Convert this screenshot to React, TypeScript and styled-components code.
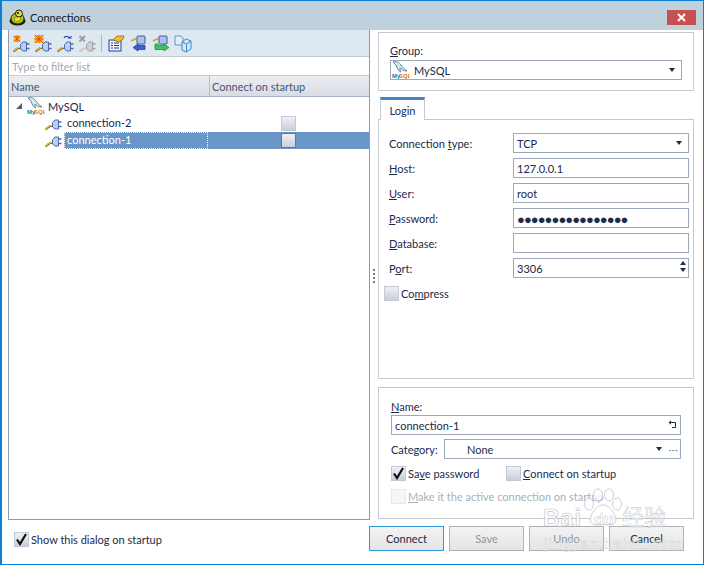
import React from "react";
import styled, { createGlobalStyle } from "styled-components";

const Global = createGlobalStyle`
  html, body { margin: 0; padding: 0; background: #fff; }
  body { font-family: "Lato", "Open Sans", sans-serif; font-size: 11px; color: #1b2a4b; }
  * { box-sizing: border-box; }
  u { text-underline-offset: 1px; }
`;

const Win = styled.div`
  position: relative; width: 704px; height: 565px; border: 1px solid #0f7fd6; border-left-width: 2px;
  display: flex; flex-direction: column; background: #fff; overflow: hidden;
`;
const TitleBar = styled.div`
  height: 29px; flex: none; background: #bfd1dc; display: flex; align-items: center; padding: 3px 0 0 7px; gap: 4px;
  font-size: 11px; color: #10192b; position: relative;
`;
const CloseBtn = styled.div`
  position: absolute; right: 7px; top: 9px; width: 29px; height: 15px; background: #c75050;
  display: flex; align-items: center; justify-content: center;
`;
const Body = styled.div`
  flex: none; height: 490px; display: flex; padding-left: 6px;
`;
const LeftCol = styled.div`
  width: 362px; height: 490px; display: flex; flex-direction: column;
  border: 1px solid #8b9bb0; border-top: none;
`;
const Toolbar = styled.div`
  height: 26px; flex: none; background: #dde8f0; display: flex; align-items: center; padding: 1px 0 0 1px;
`;
const ToolBtn = styled.span`
  width: 22px; height: 20px; display: flex; align-items: center; justify-content: center;
`;
const ToolSep = styled.span`
  width: 1px; height: 17px; background: #a9b7c2; margin: 0 4px 0 3px;
`;
const Filter = styled.div`
  height: 20px; flex: none; border-top: 1px solid #c4ccd4; border-bottom: 1px solid #c4ccd4; background: #fff; color: #a2a9b4;
  padding-left: 3px; display: flex; align-items: center;
`;
const HeadRow = styled.div`
  height: 21px; flex: none; display: grid; grid-template-columns: 200px 1fr;
  background: linear-gradient(#eceef1, #d8dce5); border-bottom: 1px solid #a7b3c2; color: #46556e;
`;
const HeadCell = styled.div`
  padding-left: 2px; display: flex; align-items: center;
  & + & { border-left: 1px solid #b5bfcb; }
`;
const Tree = styled.div`
  flex: 1; background: #fff; display: flex; flex-direction: column;
`;
const GroupRow = styled.div`
  height: 18px; display: flex; align-items: center; padding-left: 6px; gap: 3px;
`;
const ConnRow = styled.div`
  height: 17px; display: grid; grid-template-columns: 199px 1fr;
`;
const ConnName = styled.div`
  display: flex; align-items: center; padding-left: 36px; gap: 2px;
`;
const ConnLabel = styled.span<{ $sel?: boolean }>`
  flex: 1; height: 17px; line-height: 16px; padding-left: 3px;
  background: ${(p) => (p.$sel ? "#6a97c8" : "transparent")};
  color: ${(p) => (p.$sel ? "#fff" : "#1b2a4b")};
  outline: ${(p) => (p.$sel ? "1px dotted #fff" : "none")}; outline-offset: -1px;
`;
const ConnCheck = styled.div<{ $sel?: boolean }>`
  display: flex; align-items: center; justify-content: center; background: ${(p) => (p.$sel ? "#6a97c8" : "transparent")};
`;
const Box = styled.span<{ $off?: boolean; $dark?: boolean }>`
  width: 15px; height: 15px; flex: none; display: inline-flex; align-items: center; justify-content: center;
  border: 1px solid ${(p) => (p.$off ? "#e6e8ec" : p.$dark ? "#5279a8" : "#c4cad2")};
  background: ${(p) => (p.$off ? "#f5f6f8" : "linear-gradient(#eef0f4, #c8cfda)")};
`;
const Splitter = styled.div`
  width: 8px; display: flex; align-items: center; justify-content: center;
`;
const Dots = styled.div`
  display: flex; flex-direction: column; gap: 2px; margin-top: 2px;
  span { width: 2px; height: 2px; background: #6f7f96; }
`;
const RightCol = styled.div`
  width: 316px; display: flex; flex-direction: column; padding-top: 2px;
`;
const Panel = styled.div<{ $h: number }>`
  height: ${(p) => p.$h}px; flex: none; border: 1px solid #c5c9ce;
  display: flex; flex-direction: column;
`;
const GroupPanel = styled(Panel)`
  padding: 10px 11px 0 11px;
`;
const SmallLabel = styled.div`
  height: 17px; line-height: 16px;
`;
const NameLabel = styled(SmallLabel)`
  height: 17px; line-height: 18px; margin-top: -1px;
`;
const Combo = styled.div`
  height: 20px; border: 1px solid #9ba9b9; display: flex; align-items: center; padding-left: 1px; background: #fff; position: relative;
`;
const Arrow = styled.span`
  position: absolute; right: 6px; top: 7px; width: 0; height: 0;
  border-left: 3.5px solid transparent; border-right: 3.5px solid transparent; border-top: 4px solid #1b2a4b;
`;
const TabStrip = styled.div`
  height: 28px; flex: none; display: flex; align-items: flex-end; padding-left: 2px;
`;
const Tab = styled.div`
  width: 45px; height: 23px; border: 1px solid #c5c9ce; border-top: 3px solid #3f86c6; border-bottom: none;
  display: flex; align-items: center; justify-content: center; background: #fff; margin-bottom: -1px; position: relative; color: #17305f;
`;
const LoginPanel = styled(Panel)`
  padding: 13px 4px 0 10px; gap: 5px;
`;
const Row = styled.div`
  display: grid; grid-template-columns: 124px 176px; height: 20px; align-items: center;
`;
const Field = styled.div`
  height: 20px; border: 1px solid #9ba9b9; padding-left: 3px; display: flex; align-items: center; position: relative; background: #fff; color: #1b2a4b;
`;
const Dotted = styled.span`
  font-family: "Noto Sans", sans-serif; font-size: 13px; letter-spacing: -0.95px; color: #1d2c4a; padding-top: 1px;
`;
const Spin = styled.span`
  position: absolute; right: 2px; top: 2px; display: flex; flex-direction: column; gap: 3px;
  i { width: 0; height: 0; border-left: 3.5px solid transparent; border-right: 3.5px solid transparent; }
  i:first-child { border-bottom: 4px solid #1b2a4b; }
  i:last-child { border-top: 4px solid #1b2a4b; }
`;
const CheckLine = styled.label<{ $muted?: boolean }>`
  display: flex; align-items: center; gap: 2px; height: 16px;
  color: ${(p) => (p.$muted ? "#aab0ba" : "#1b2a4b")};
`;
const CompressLine = styled(CheckLine)`
  margin: 2px 0 0 -5px;
`;
const NamePanel = styled(Panel)`
  margin-top: 8px; padding: 11px 12px 0 12px;
`;
const NameField = styled(Field)`
  padding-left: 3px;
`;
const CategoryRow = styled.div`
  display: flex; align-items: center; height: 20px; margin-top: 4px;
`;
const CategoryLabel = styled.span`
  width: 53px; flex: none;
`;
const CategoryCombo = styled(Combo)`
  flex: 1; padding-left: 22px;
`;
const CatArrow = styled(Arrow)`
  right: 18px;
`;
const More = styled.span`
  position: absolute; right: 2px; top: 3px; color: #5a6a80; font-size: 10px; letter-spacing: 0.5px; line-height: 12px;
`;
const Checks = styled.div`
  display: grid; grid-template-columns: 115px 1fr; margin-top: 6px; height: 17px; align-items: center;
`;
const MakeActive = styled(CheckLine)`
  margin-top: 6px;
`;
const Footer = styled.div`
  flex: 1; display: flex; align-items: flex-start; padding: 6px 19px 0 12px;
`;
const FooterCheck = styled(CheckLine)`
  margin: 5px auto 0 0;
`;
const Buttons = styled.div`
  display: flex; gap: 5px;
`;
const Btn = styled.div<{ $primary?: boolean; $off?: boolean }>`
  width: 75px; height: 25px; display: flex; align-items: center; justify-content: center;
  border: 1px solid ${(p) => (p.$primary ? "#2f9ad8" : "#b3b3b3")};
  background: linear-gradient(#f3f3f3, #e4e4e4);
  color: ${(p) => (p.$off ? "#8e96a2" : "#1b2a4b")};
`;
const Watermark = styled.div`
  position: absolute; left: 538px; top: 487px; width: 135px; height: 66px; pointer-events: none;
  color: rgba(255,255,255,.72); font-family: "Liberation Sans", "Noto Sans CJK SC", sans-serif;
`;
const WmPaw = styled.svg`
  position: absolute; left: 42px; top: 0;
`;
const WmBai = styled.span`
  position: absolute; left: 3px; top: 17px; font-size: 23px; font-weight: bold; letter-spacing: 1px;
  -webkit-text-stroke: 0.7px rgba(150,155,165,.6); line-height: 26px;
`;
const WmDu = styled.span`
  position: absolute; left: 54px; top: 22px; font-size: 16px; font-weight: bold;
  -webkit-text-stroke: 0.5px rgba(150,155,165,.6); line-height: 20px;
`;
const WmCn = styled.span`
  position: absolute; left: 82px; top: 17px; font-size: 22px; letter-spacing: 0;
  -webkit-text-stroke: 0.5px rgba(150,155,165,.6); line-height: 26px; white-space: nowrap;
`;
const WmSub = styled.span`
  position: absolute; left: 4px; top: 47px; font-size: 15px; letter-spacing: 1.05px; white-space: nowrap;
  -webkit-text-stroke: 0.35px rgba(150,155,165,.55); line-height: 18px;
`;

const Plug = ({ gray }: { gray?: boolean }) => (
  <svg width="17" height="14" viewBox="0 0 17 14" style={{ flex: "none" }}>
    <path d="M0.5 12.5 L5 9 H8" stroke={gray ? "#b8b8b8" : "#6b5514"} strokeWidth="2.2" fill="none" />
    <path d="M0.7 12 L5 8.6 H8" stroke={gray ? "#dcdcdc" : "#f6c93f"} strokeWidth="1.1" fill="none" />
    <path d="M7.5 5.5 L10 3 H13.5 V12 H10 L7.5 10 Z" fill={gray ? "#d0d0d0" : "#b8cff2"} stroke={gray ? "#a0a0a0" : "#4c6aa8"} strokeWidth="1" />
    <path d="M13.5 5 H16.5 M13.5 9.5 H16.5" stroke={gray ? "#a0a0a0" : "#4c6aa8"} strokeWidth="1.3" />
  </svg>
);
const Dolphin = () => (
  <svg width="18" height="18" viewBox="0 0 18 18" style={{ flex: "none" }}>
    <path d="M1 1 C4 0 7 1 9 4 C11 7 12 8 15 10 C12 10 10 9 8 7 C8 9 8 10 9 11 C6 10 5 7 4 4 C3 3 2 2 1 1 Z" fill="#dbe7ef" stroke="#40708f" strokeWidth="0.8" />
    <text x="0" y="17" fontSize="6" fontWeight="700" fill="#0b7fa5" fontFamily="Liberation Sans">My</text>
    <text x="7" y="17" fontSize="6" fontWeight="700" fill="#e07b12" fontFamily="Liberation Sans">SQL</text>
  </svg>
);
const Star = ({ big }: { big?: boolean }) => (
  <g>
    <rect x={big ? 0.5 : 1.5} y={big ? 0 : 0.5} width={big ? 9 : 7} height={big ? 8 : 6.5} fill="#fbc02a" />
    <path d={big ? "M1 0 L9 8 M9 0 L1 8 M5 0 V8 M0.5 4 H9.5" : "M2 1 L8 6.5 M8 1 L2 6.5 M5 0.5 V7"} stroke="#e8421a" strokeWidth="1" />
  </g>
);
const ToolNew = ({ big }: { big?: boolean }) => (
  <svg width="18" height="18" viewBox="0 0 18 18">
    <g transform="translate(1 4)"><Plug /></g>
    <Star big={big} />
  </svg>
);
const ToolRefresh = () => (
  <svg width="18" height="18" viewBox="0 0 18 18">
    <g transform="translate(1 4)"><Plug /></g>
    <path d="M8 3 C9 0.8 12 0.8 13.5 3" stroke="#1d4fbf" strokeWidth="1.4" fill="none" />
    <path d="M11.5 3.5 H15.5 V0.8 Z" fill="#1d4fbf" />
  </svg>
);
const ToolDelete = () => (
  <svg width="18" height="18" viewBox="0 0 18 18">
    <g transform="translate(1 4)"><Plug gray /></g>
    <path d="M1.5 1 L7 6.5 M7 1 L1.5 6.5" stroke="#9a9a9a" strokeWidth="1.8" />
  </svg>
);
const ToolProps = () => (
  <svg width="18" height="18" viewBox="0 0 18 18">
    <rect x="1" y="5" width="12" height="11" fill="#eef2fb" stroke="#23409a" />
    <path d="M3 8 H5 M6 8 H11 M3 10.5 H5 M6 10.5 H11 M3 13 H5 M6 13 H11" stroke="#23409a" />
    <path d="M5 5 L9 1 H16 L15 4 L11 7 L8 6 Z" fill="#f2bb3a" stroke="#8a6a12" strokeWidth="0.8" />
  </svg>
);
const ToolImport = () => (
  <svg width="18" height="18" viewBox="0 0 18 18">
    <path d="M1 6 L6 3.5" stroke="#d9a628" strokeWidth="1.8" />
    <rect x="7" y="1" width="8" height="8" rx="1" fill="#a9c3ec" stroke="#3d5a96" />
    <path d="M15 10.5 H8 V9 L3 12.5 L8 16 V14.5 H15 Z" fill="#3d5fd0" stroke="#1e318f" strokeWidth="0.7" />
  </svg>
);
const ToolExport = () => (
  <svg width="18" height="18" viewBox="0 0 18 18">
    <path d="M1 6 L6 3.5" stroke="#d9a628" strokeWidth="1.8" />
    <rect x="7" y="1" width="8" height="8" rx="1" fill="#a9c3ec" stroke="#3d5a96" />
    <path d="M3 9 V14.5 H12 V16 L17 12.5 L12 9 V10.5 H6 V9 Z" fill="#3fc55a" stroke="#14803a" strokeWidth="0.7" />
  </svg>
);
const ToolCube = () => (
  <svg width="18" height="18" viewBox="0 0 18 18">
    <path d="M1 1 H7 L9 3 V10 H1 Z" fill="#e3eefa" stroke="#5b94c9" />
    <path d="M8 7 L12 4 L17 6 V14 L12 17 L8 15 Z" fill="#d6e8f8" stroke="#3f86c6" />
    <path d="M8 7 L12.5 9 L17 6 M12.5 9 V17" stroke="#3f86c6" fill="none" />
  </svg>
);
const Turtle = () => (
  <svg width="17" height="17" viewBox="0 0 17 17" style={{ flex: "none" }}>
    <ellipse cx="8.5" cy="12" rx="8" ry="4.5" fill="#1c1c10" />
    <ellipse cx="8.5" cy="9.5" rx="6.5" ry="5.5" fill="#b4c71c" stroke="#1c1c10" />
    <circle cx="10" cy="4.5" r="3.5" fill="#d8e23a" stroke="#1c1c10" />
    <circle cx="9" cy="4" r="1" fill="#111" />
    <path d="M6 8 L11 8 L12 11 L8 13 L5 11 Z" fill="#eedc2a" stroke="#5f6410" strokeWidth="0.6" />
  </svg>
);
const Check = () => (
  <svg width="13" height="13" viewBox="0 0 13 13">
    <path d="M2 6.5 L5 11 L11 1" stroke="#111" strokeWidth="2.2" fill="none" />
  </svg>
);
const ReturnIcon = () => (
  <svg width="9" height="9" viewBox="0 0 9 9" style={{ position: "absolute", right: 3, top: 4 }}>
    <path d="M0.5 2.5 L3 0.3 V4.7 Z" fill="#1b2a4b" />
    <path d="M3 2.5 H7.5 V7.5 H4" stroke="#1b2a4b" strokeWidth="1" fill="none" />
  </svg>
);

const fields: [React.ReactNode, string][] = [
  [<><u>H</u>ost:</>, "127.0.0.1"],
  [<><u>U</u>ser:</>, "root"],
];

export default function App() {
  return (
    <Win>
      <Global />
      <TitleBar>
        <Turtle />
        <span>Connections</span>
        <CloseBtn>
          <svg width="9" height="9" viewBox="0 0 9 9"><path d="M1 1 L8 8 M8 1 L1 8" stroke="#fff" strokeWidth="2" /></svg>
        </CloseBtn>
      </TitleBar>
      <Body>
        <LeftCol>
          <Toolbar>
            <ToolBtn><ToolNew /></ToolBtn>
            <ToolBtn><ToolNew big /></ToolBtn>
            <ToolBtn><ToolRefresh /></ToolBtn>
            <ToolBtn><ToolDelete /></ToolBtn>
            <ToolSep />
            <ToolBtn><ToolProps /></ToolBtn>
            <ToolBtn><ToolImport /></ToolBtn>
            <ToolBtn><ToolExport /></ToolBtn>
            <ToolBtn><ToolCube /></ToolBtn>
          </Toolbar>
          <Filter>Type to filter list</Filter>
          <HeadRow>
            <HeadCell>Name</HeadCell>
            <HeadCell>Connect on startup</HeadCell>
          </HeadRow>
          <Tree>
            <GroupRow>
              <svg width="8" height="8" viewBox="0 0 8 8" style={{ flex: "none", marginRight: 1 }}><path d="M7 1 V7 H1 Z" fill="#55616f" /></svg>
              <Dolphin />
              <span>MySQL</span>
            </GroupRow>
            <ConnRow>
              <ConnName><Plug /><ConnLabel>connection-2</ConnLabel></ConnName>
              <ConnCheck><Box /></ConnCheck>
            </ConnRow>
            <ConnRow>
              <ConnName><Plug /><ConnLabel $sel>connection-1</ConnLabel></ConnName>
              <ConnCheck $sel><Box $dark /></ConnCheck>
            </ConnRow>
          </Tree>
        </LeftCol>
        <Splitter>
          <Dots><span /><span /><span /><span /></Dots>
        </Splitter>
        <RightCol>
          <GroupPanel $h={59}>
            <SmallLabel><u>G</u>roup:</SmallLabel>
            <Combo>
              <Dolphin />
              <span style={{ marginLeft: 4 }}>MySQL</span>
              <Arrow />
            </Combo>
          </GroupPanel>
          <TabStrip><Tab>Login</Tab></TabStrip>
          <LoginPanel $h={260}>
            <Row>
              <span>Connection <u>t</u>ype:</span>
              <Field>TCP<Arrow /></Field>
            </Row>
            {fields.map(([l, v], i) => (
              <Row key={i}><span>{l}</span><Field>{v}</Field></Row>
            ))}
            <Row>
              <span><u>P</u>assword:</span>
              <Field><Dotted>●●●●●●●●●●●●●●●●</Dotted></Field>
            </Row>
            <Row><span><u>D</u>atabase:</span><Field /></Row>
            <Row>
              <span>P<u>o</u>rt:</span>
              <Field>3306<Spin><i /><i /></Spin></Field>
            </Row>
            <CompressLine><Box /><span>Co<u>m</u>press</span></CompressLine>
          </LoginPanel>
          <NamePanel $h={132}>
            <NameLabel><u>N</u>ame:</NameLabel>
            <NameField>connection-1<ReturnIcon /></NameField>
            <CategoryRow>
              <CategoryLabel>Category:</CategoryLabel>
              <CategoryCombo>None<CatArrow /><More>···</More></CategoryCombo>
            </CategoryRow>
            <Checks>
              <CheckLine><Box><Check /></Box><span>Sa<u>v</u>e password</span></CheckLine>
              <CheckLine><Box /><span><u>C</u>onnect on startup</span></CheckLine>
            </Checks>
            <MakeActive $muted><Box $off /><span><u>M</u>ake it the active connection on startup</span></MakeActive>
          </NamePanel>
        </RightCol>
      </Body>
      <Footer>
        <FooterCheck><Box><Check /></Box><span>Show this dialog on startup</span></FooterCheck>
        <Buttons>
          <Btn $primary>Connect</Btn>
          <Btn $off>Save</Btn>
          <Btn $off>Undo</Btn>
          <Btn>Cancel</Btn>
        </Buttons>
      </Footer>
      <Watermark>
        <WmPaw width="42" height="40" viewBox="0 0 42 40">
          <g fill="rgba(255,255,255,.72)" stroke="rgba(170,175,185,.6)" strokeWidth="1">
            <ellipse cx="7" cy="16" rx="4.5" ry="6" />
            <ellipse cx="16" cy="7" rx="4.5" ry="6" />
            <ellipse cx="27" cy="7" rx="4.5" ry="6" />
            <ellipse cx="35" cy="16" rx="4.5" ry="6" />
            <path d="M21 17 C14 17 9 26 8 31 C8 37 14 38 21 36 C28 38 34 37 34 31 C33 26 28 17 21 17 Z" />
          </g>
        </WmPaw>
        <WmBai>Bai</WmBai>
        <WmDu>du</WmDu>
        <WmCn>经验</WmCn>
        <WmSub>jingyan.baidu.com</WmSub>
      </Watermark>
    </Win>
  );
}
